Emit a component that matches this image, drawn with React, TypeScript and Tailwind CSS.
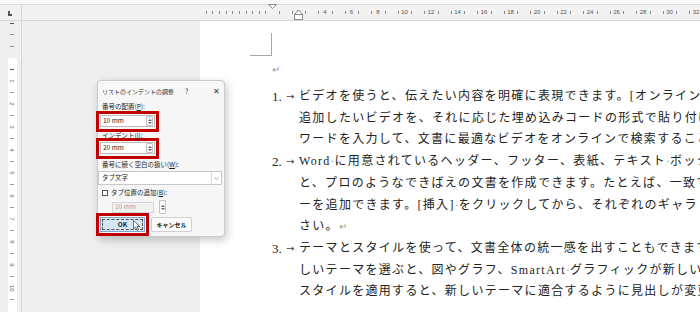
import React from 'react'

const ORIGIN = 272 // left margin on the horizontal ruler
const UNIT = 13.25

const Spinner = ({ h = 'h-[10px]' }: { h?: string }) => (
  <div className={`w-[7px] ${h} border border-[#c4c4c4] rounded-[1px] bg-[#fbfbfb] flex flex-col items-center justify-center gap-[1px]`}>
    <svg width="4" height="2" viewBox="0 0 4 2"><path d="M0 2 L2 0 L4 2 Z" fill="#666" /></svg>
    <svg width="4" height="2" viewBox="0 0 4 2"><path d="M0 0 L2 2 L4 0 Z" fill="#666" /></svg>
  </div>
)

const renderLine = (s: string) =>
  s.split(/([·↵])/).map((part, i) =>
    part === '·' ? (
      <span key={i} className="text-[#9a9a9a] tracking-normal">·</span>
    ) : part === '↵' ? (
      <span key={i} className="text-[#9a9a9a] text-[10px]">↵</span>
    ) : (
      <span key={i}>{part}</span>
    )
  )

const items = [
  {
    n: '1.',
    lines: [
      'ビデオを使うと、伝えたい内容を明確に表現できます。[オンライン ビデオ] をクリックすると、',
      '追加したいビデオを、それに応じた埋め込みコードの形式で貼り付けできます。キーワードを',
      'ワードを入力して、文書に最適なビデオをオンラインで検索することもできます。↵',
    ],
  },
  {
    n: '2.',
    lines: [
      'Word·に用意されているヘッダー、フッター、表紙、テキスト·ボックス·デザインを組み合わせる',
      'と、プロのようなできばえの文書を作成できます。たとえば、一致する表紙、ヘッダー、サイドバ',
      'ーを追加できます。[挿入]·をクリックしてから、それぞれのギャラリーから目的の要素を選んでくだ',
      'さい。↵',
    ],
  },
  {
    n: '3.',
    lines: [
      'テーマとスタイルを使って、文書全体の統一感を出すこともできます。[デザイン] をクリックし新',
      'しいテーマを選ぶと、図やグラフ、SmartArt·グラフィックが新しいテーマに合わせて変わります。',
      'スタイルを適用すると、新しいテーマに適合するように見出しが変更されます。',
    ],
  },
]

const HRuler = () => {
  const marks: React.ReactNode[] = []
  for (let k = 1; k <= 10; k++) {
    marks.push(
      <div key={`m${k}`} className="absolute top-[6px] w-px h-[3px] bg-[#8a8a8a]" style={{ left: ORIGIN - 6.625 * k - 22 }} />
    )
  }
  for (let n = 0; n <= 32; n++) {
    const x = ORIGIN + UNIT * n - 22
    marks.push(
      <div key={`h${n}`} className="absolute top-[6px] w-px h-[3px] bg-[#8a8a8a]" style={{ left: x + 6.6 }} />
    )
    if (n > 0 && n % 2 === 0) {
      marks.push(
        <span
          key={`n${n}`}
          className="absolute top-[4px] w-[12px] -ml-[6px] text-center text-[6px] leading-[7px] text-[#555] font-[family-name:'Liberation_Sans',sans-serif]"
          style={{ left: x }}
        >
          {n}
        </span>
      )
    }
  }
  return (
    <div className="relative flex-1 h-full">
      {marks}
      {/* first line indent */}
      <svg className="absolute left-[246px] -top-px" width="9" height="5" viewBox="0 0 9 5">
        <path d="M0.5 0.5 H8.5 L4.5 4.5 Z" fill="#fff" stroke="#8a8a8a" />
      </svg>
      {/* hanging + left indent */}
      <svg className="absolute left-[272px] top-[4px]" width="9" height="11" viewBox="0 0 9 11">
        <path d="M0.5 5.5 L4.5 1 L8.5 5.5 Z" fill="#fff" stroke="#8a8a8a" />
        <rect x="0.5" y="5.5" width="8" height="5" fill="#fff" stroke="#8a8a8a" />
      </svg>
    </div>
  )
}

const VRuler = () => {
  const marks: React.ReactNode[] = []
  ;[23, 34, 46].forEach((y, i) =>
    marks.push(
      <div key={`t${i}`} className={`absolute left-[10px] w-[4px] h-px ${i === 0 ? 'bg-[#555]' : 'bg-[#999]'}`} style={{ top: y - 21 }} />
    )
  )
  for (let i = 0; i < 21; i++) {
    const y = 69 + 11.5 * i - 21
    if (i % 2 === 0) {
      marks.push(
        <div key={`v${i}`} className={`absolute left-[10px] w-[4px] h-px ${i === 0 ? 'bg-[#555]' : 'bg-[#999]'}`} style={{ top: y }} />
      )
    } else {
      marks.push(
        <span
          key={`v${i}`}
          className="absolute left-[9px] w-[6px] text-center rotate-90 text-[6px] leading-[6px] text-[#666] font-[family-name:'Liberation_Sans',sans-serif]"
          style={{ top: y - 3 }}
        >
          {(i + 1) / 2}
        </span>
      )
    }
  }
  return (
    <div className="relative w-[22px] h-full border-r border-[#d6d6d6] bg-[#efefef]">
      <div className="absolute left-[8px] top-[37px] w-[9px] bottom-0 bg-white" />
      {marks}
    </div>
  )
}

const Dialog = () => (
  <div className="absolute left-[97px] top-[80px] w-[128px] h-[157px] bg-[#f7f7f7] border border-[#cbcbcb] rounded-[4px] shadow-[2px_3px_8px_rgba(0,0,0,0.22)] text-[6.5px] text-[#1a1a1a] font-[family-name:'Noto_Sans_CJK_JP',sans-serif]">
    {/* title bar */}
    <div className="h-[20px] flex items-center pl-[4px] text-[#333]">
      <span className="w-[83px] text-[6px]">リストのインデントの調整</span>
      <span className="w-[28px] text-[7px]">?</span>
      <span className="text-[7.5px]">✕</span>
    </div>

    <div className="h-[10px] pl-[4px] leading-[10px]">
      番号の配置(<span className="underline">P</span>):
    </div>
    <div className="-ml-[2px] w-[63px] h-[21px] border-[3px] border-[#c00000] pt-px pl-px">
      <div className="w-[55px] h-[12px] bg-white border border-[#bdbdbd] flex items-center justify-between pl-[2px] pr-px">
        <span className="text-[6.5px]">10 mm</span>
        <Spinner />
      </div>
    </div>

    <div className="h-[6px] pl-[4px] leading-[6px]">
      インデント(<span className="underline">I</span>):
    </div>
    <div className="-ml-[2px] w-[63px] h-[21px] border-[3px] border-[#c00000] pt-px pl-px">
      <div className="w-[55px] h-[12px] bg-white border border-[#bdbdbd] flex items-center justify-between pl-[2px] pr-px">
        <span className="text-[6.5px]">20 mm</span>
        <Spinner />
      </div>
    </div>

    <div className="h-[11px] pl-[4px] leading-[11px]">
      番号に続く空白の扱い(<span className="underline">W</span>):
    </div>
    <div className="mt-px w-[124px] h-[14px] bg-white border border-[#c8c8c8] flex items-center">
      <span className="flex-1 pl-[3px]">タブ文字</span>
      <div className="w-[10px] h-full border-l border-[#dcdcdc] flex items-center justify-center">
        <svg width="5" height="3" viewBox="0 0 5 3"><path d="M0.5 0.5 L2.5 2.5 L4.5 0.5" fill="none" stroke="#888" strokeWidth="0.8" /></svg>
      </div>
    </div>

    <div className="h-[16px] pl-[4px] flex items-center gap-[3px]">
      <div className="w-[6px] h-[6px] border border-[#555] bg-white" />
      <span>タブ位置の追加(<span className="underline">B</span>):</span>
    </div>
    <div className="h-[12px] pl-[14px] flex items-center gap-[5px]">
      <div className="w-[42px] h-[11px] bg-[#f1f1f1] border border-[#d6d6d6] flex items-center pl-[2px]">
        <span className="text-[6.5px] text-[#a0a0a0]">10 mm</span>
      </div>
      <Spinner h="h-[14px]" />
    </div>

    <div className="relative flex items-start -ml-[2px]">
      <div className="w-[53px] h-[23px] border-[3px] border-[#c00000] p-px">
        <div className="w-[45px] h-[15px] bg-[#d6e7f6] border border-[#7fa6cc] flex items-center justify-center">
          <div className="w-[41px] h-[11px] border border-dashed border-[#555] flex items-center justify-center">
            <span className="text-[6.5px] font-bold">OK</span>
          </div>
        </div>
      </div>
      <div className="ml-[2px] mt-[4px] w-[41px] h-[15px] bg-[#fdfdfd] border border-[#cfcfcf] rounded-[2px] flex items-center justify-center">
        <span className="font-bold text-[6px]">キャンセル</span>
      </div>
      {/* mouse pointer */}
      <svg className="absolute left-[37px] top-[7px]" width="8" height="11" viewBox="0 0 8 11">
        <path d="M0.5 0.5 L0.5 9 L2.6 7 L4.2 10.4 L5.6 9.8 L4 6.5 L7 6.5 Z" fill="#fff" stroke="#333" strokeWidth="0.7" strokeLinejoin="round" />
      </svg>
    </div>
  </div>
)

export default function App() {
  return (
    <div className="relative w-[700px] h-[312px] overflow-hidden bg-[#efefef]">
      {/* top strip */}
      <div className="h-[5px] bg-[#f9f9f9] border-b border-[#dadada]" />
      {/* horizontal ruler */}
      <div className="h-[16px] flex bg-[#f1f1f1] border-b border-[#d6d6d6]">
        <div className="w-[22px] h-full border-r border-[#d6d6d6] flex items-center justify-center">
          <div className="w-[4px] h-[5px] border-l-2 border-b-2 border-[#555] ml-[-2px] mt-[2px]" />
        </div>
        <HRuler />
      </div>

      {/* body */}
      <div className="flex h-[291px]">
        <VRuler />
        <div className="w-[178px] h-full bg-[#efefef]" />
        <div className="relative flex-1 h-full bg-white overflow-hidden">
          {/* corner crop mark */}
          <div className="absolute left-[71px] top-[12px] w-px h-[22px] bg-[#a8a8a8]" />
          <div className="absolute left-[50px] top-[34px] w-[22px] h-px bg-[#a8a8a8]" />

          <div className="pl-[72px] pt-[38px] text-[#222] font-[family-name:'Liberation_Serif','Noto_Sans_CJK_JP',serif]">
            <div className="h-[22px] leading-[22px] text-[10px] text-[#9a9a9a]">↵</div>
            <div className="mt-[5px] text-[12px] leading-[21.7px] tracking-[1.3px] whitespace-nowrap">
              {items.map((it) => (
                <div key={it.n} className="flex items-start">
                  <div className="w-[27px] h-[21.7px] shrink-0 flex items-center tracking-normal">
                    <span className="text-[13px] w-[14px]">{it.n}</span>
                    <span className="text-[10px] leading-none text-[#444] font-[family-name:'DejaVu_Sans',sans-serif]">→</span>
                  </div>
                  <div>
                    {it.lines.map((l, i) => (
                      <div key={i}>{renderLine(l)}</div>
                    ))}
                  </div>
                </div>
              ))}
            </div>
          </div>
        </div>
      </div>

      <Dialog />
    </div>
  )
}
